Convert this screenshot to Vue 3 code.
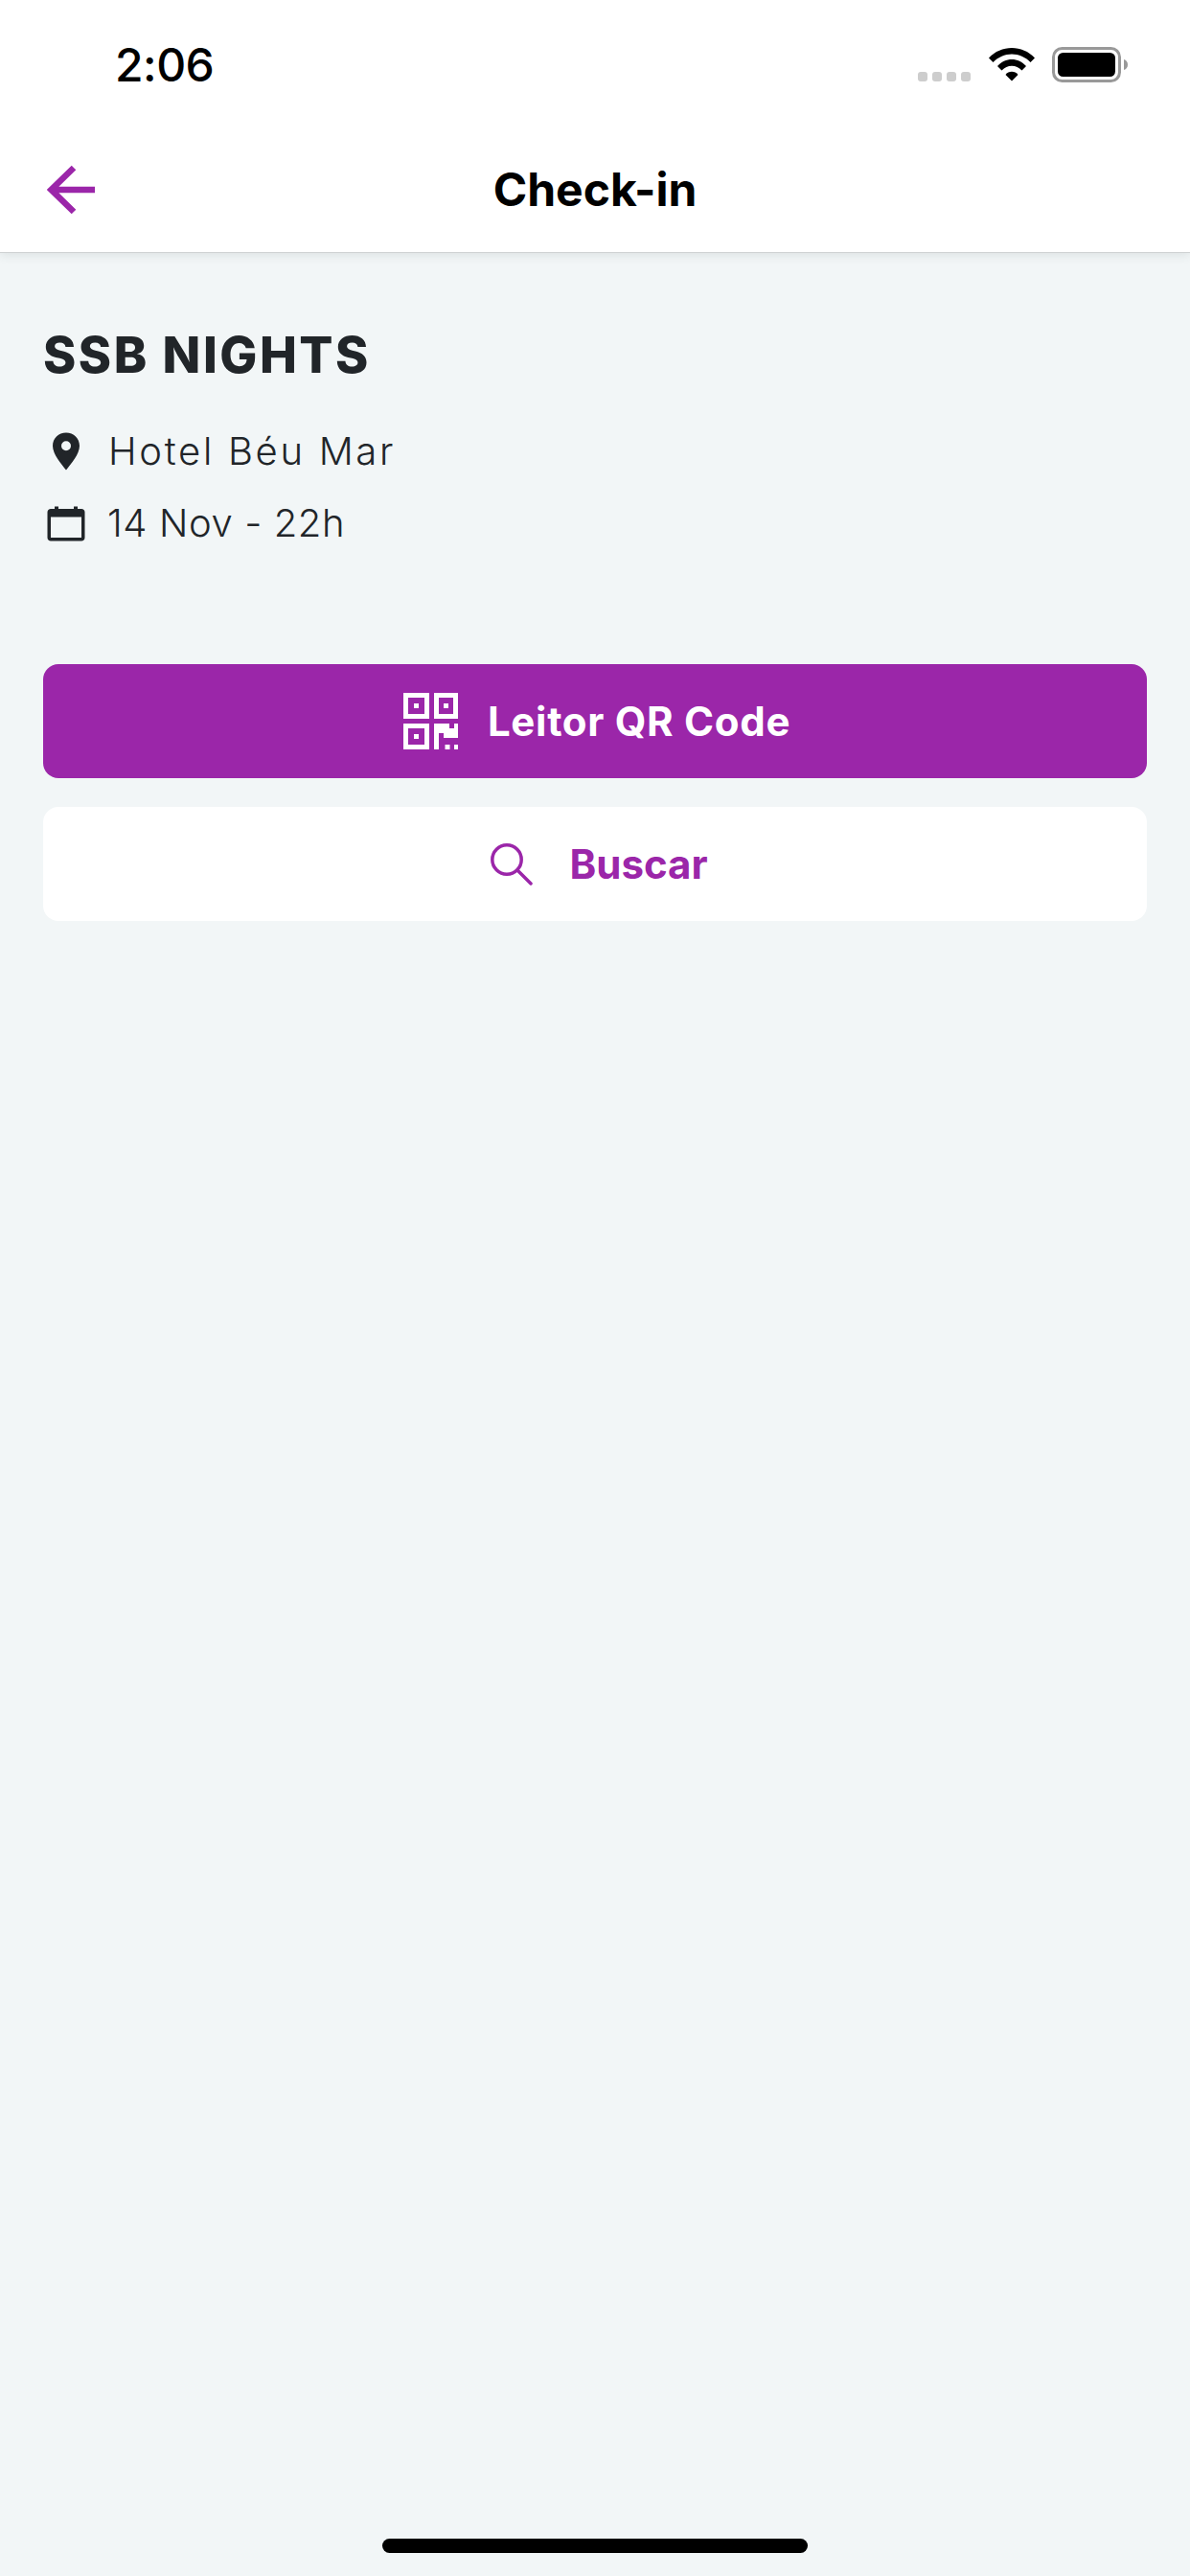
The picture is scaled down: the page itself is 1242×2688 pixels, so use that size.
<script setup>
const signalDots = [1, 2, 3, 4];
</script>

<template>
  <div class="screen">
    <header class="top">
      <div class="status">
        <span class="time">2:06</span>
        <div class="status-icons">
          <div class="dots">
            <i v-for="d in signalDots" :key="d"></i>
          </div>
          <svg class="wifi" width="48" height="36" viewBox="0 0 48 36">
            <path d="M0 11.500C6.500 4.500 15 1 24 1s17.500 3.500 24 10.500l-4.500 4.500C38 10.500 31.500 7.500 24 7.500S10 10.500 4.500 16Z" fill="#000" />
            <path d="M9 20C13 15.500 18.500 13 24 13s11 2.500 15 7l-4.500 4.500C31.500 21.500 28 19.800 24 19.800S16.500 21.500 13.500 24.500Z" fill="#000" />
            <path d="M17.500 29C19 27 21.500 25.800 24 25.800S29 27 30.500 29L24 35.500Z" fill="#000" />
          </svg>
          <svg class="battery" width="80" height="37" viewBox="0 0 80 37">
            <rect x="1.500" y="1.500" width="69" height="34" rx="9" fill="none" stroke="#999" stroke-width="3" />
            <rect x="6" y="6" width="60" height="25" rx="5.500" fill="#000" />
            <path d="M75 13c2.500.5 4 2.800 4 5.500s-1.500 5-4 5.500Z" fill="#999" />
          </svg>
        </div>
      </div>
      <div class="nav">
        <svg class="back" width="50" height="52" viewBox="0 0 50 52">
          <path d="M50 26H5M28 3 4.500 26 28 49" fill="none" stroke="#9b26a9" stroke-width="6.500" />
        </svg>
        <h1>Check-in</h1>
      </div>
    </header>

    <main class="content">
      <h2>SSB NIGHTS</h2>
      <div class="info">
        <svg class="pin" width="28" height="40" viewBox="6 0 28 40">
          <path fill-rule="evenodd" d="M20 0.500C28 0.500 34 6.500 34 14.200 34 23 25 33 20 39.500 15 33 6 23 6 14.200 6 6.500 12 0.500 20 0.500ZM20 9.300A5 5 0 1 0 20 19.300 5 5 0 1 0 20 9.300Z" fill="#212529" />
        </svg>
        <span class="hotel">Hotel Béu Mar</span>
      </div>
      <div class="info date">
        <svg class="cal" width="40" height="37" viewBox="0 0 40 37">
          <path fill-rule="evenodd" d="M4 3H8V0.500H12V3H28V0.500H32V3H36C38 3 39.500 4.500 39.500 6.500V33C39.500 35 38 36.500 36 36.500H4C2 36.500 0.500 35 0.500 33V6.500C0.500 4.500 2 3 4 3ZM4 11.500V33H36V11.500Z" fill="#212529" />
        </svg>
        <span>14 Nov - 22h</span>
      </div>

      <button class="btn primary">
        <svg width="57" height="59" viewBox="0 0 57 59">
          <g fill="#fff" fill-rule="evenodd">
            <path d="M0 0H27V27H0ZM5 5V22H22V5ZM11 11H16V16H11Z" />
            <path d="M32 0H57V27H32ZM37 5V22H52V5ZM42 11H47V16H42Z" />
            <path d="M0 32H27V59H0ZM5 37V54H22V37ZM11 43H16V48H11Z" />
            <path d="M32 32H48V37H53V32H57V47H42V42H37V59H32Z" />
            <path d="M43.500 54H48.500V59H43.500ZM53 54H57V59H53Z" />
          </g>
        </svg>
        <span>Leitor QR Code</span>
      </button>
      <button class="btn secondary">
        <svg width="44" height="44" viewBox="0 0 44 44">
          <circle cx="17" cy="17" r="15.200" fill="none" stroke="#9b26a9" stroke-width="3.500" />
          <path d="M28 28 42 42" fill="none" stroke="#9b26a9" stroke-width="3.500" stroke-linecap="round" />
        </svg>
        <span>Buscar</span>
      </button>
    </main>

    <div class="home-bar"></div>
  </div>
</template>

<style>
html,
body {
  margin: 0;
  background: #f2f6f7;
}
</style>

<style scoped>
.screen {
  position: relative;
  width: 1242px;
  height: 2688px;
  background: #f2f6f7;
  font-family: Inter, "Liberation Sans", sans-serif;
  color: #212529;
  overflow: hidden;
}

.top {
  height: 263px;
  background: #fff;
  border-bottom: 1px solid #cfd2d3;
  box-shadow: 0 2px 10px rgba(60, 70, 75, 0.12);
}

.status {
  height: 132px;
  display: flex;
  justify-content: space-between;
  padding: 44px 64px 0 120px;
  box-sizing: border-box;
}

.time {
  font-family: Inter, sans-serif;
  font-size: 48px;
  font-weight: 500;
  line-height: 47px;
  letter-spacing: -0.5px;
  color: #000;
}

.status-icons {
  display: flex;
  align-items: flex-start;
  padding-top: 5px;
}

.dots {
  display: flex;
  gap: 5px;
  margin-top: 26px;
  margin-right: 19px;
}

.dots i {
  width: 10px;
  height: 10px;
  border-radius: 3px;
  background: #cdcdcd;
}

.wifi {
  margin-right: 18px;
}

.nav {
  position: relative;
  height: 131px;
  display: flex;
  align-items: center;
  justify-content: center;
}

.back {
  position: absolute;
  left: 49px;
  top: 40px;
}

h1 {
  margin: 0;
  font-size: 48px;
  font-weight: 700;
  color: #000;
}

.content {
  padding: 0 45px;
}

h2 {
  margin: 0;
  padding-top: 75px;
  font-size: 52px;
  line-height: 64px;
  font-weight: 800;
  letter-spacing: 2.5px;
}

.info {
  display: flex;
  align-items: center;
  margin-top: 44px;
  font-size: 40px;
  font-weight: 300;
  line-height: 48px;
  letter-spacing: 2.700px;
}

.pin {
  margin-left: 10px;
}

.hotel {
  margin-left: 30px;
}

.info.date {
  margin-top: 27px;
}

.cal {
  margin-left: 4px;
}

.info.date span {
  margin-left: 23px;
  letter-spacing: 0.600px;
}

.btn {
  display: flex;
  align-items: center;
  justify-content: center;
  width: 1152px;
  height: 119px;
  border: none;
  border-radius: 16px;
  font-family: inherit;
  font-size: 42px;
  font-weight: 700;
}

.primary {
  margin-top: 123px;
  padding-left: 10px;
  background: #9b26a9;
  color: #fff;
  gap: 31px;
  letter-spacing: 0.700px;
}

.secondary {
  margin-top: 30px;
  padding-left: 15px;
  background: #fff;
  color: #9b26a9;
  gap: 38px;
}

.home-bar {
  position: absolute;
  left: 399px;
  top: 2649px;
  width: 444px;
  height: 15px;
  border-radius: 8px;
  background: #000;
}
</style>
